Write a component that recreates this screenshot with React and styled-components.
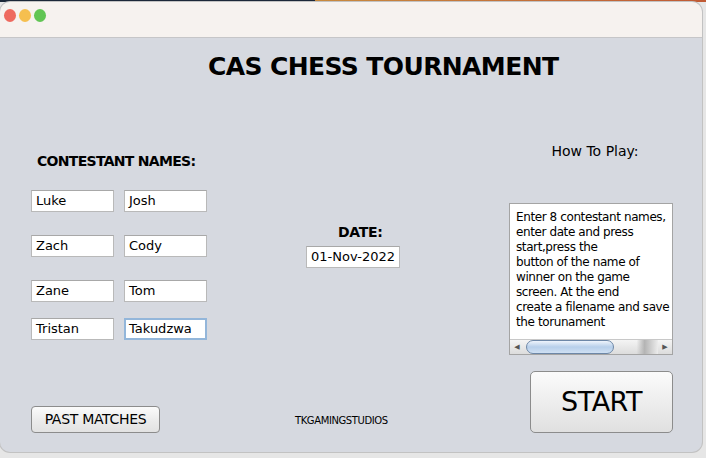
import React from 'react';
import styled, { createGlobalStyle } from 'styled-components';

const GlobalStyle = createGlobalStyle`
  html, body {
    margin: 0;
    padding: 0;
    width: 706px;
    height: 458px;
    overflow: hidden;
    background: #e6e6e6;
    font-family: 'DejaVu Sans', 'Liberation Sans', sans-serif;
  }
`;

const players = [
  ['Luke', 'Josh'],
  ['Zach', 'Cody'],
  ['Zane', 'Tom'],
  ['Tristan', 'Takudzwa'],
];

const howTo = [
  'Enter 8 contestant names,',
  'enter date and press',
  'start,press the',
  'button of the name of',
  'winner on the game',
  'screen. At the end',
  'create a filename and save',
  'the torunament',
];

const App = () => {
  return (
    <Screen>
      <GlobalStyle />
      <TopStrip />
      <Window>
        <TitleBar>
          <Light color="#ee6a5f" />
          <Light color="#f5bf4f" />
          <Light color="#61c554" />
        </TitleBar>
        <Body>
          <Title>CAS CHESS TOURNAMENT</Title>
          <Columns>
            <LeftCol>
              <Heading>CONTESTANT NAMES:</Heading>
              <NameGrid>
                {players.flat().map((name, i) => (
                  <NameField key={name} focused={i === 7}>{name}</NameField>
                ))}
              </NameGrid>
              <PastButton>PAST MATCHES</PastButton>
            </LeftCol>
            <MidCol>
              <DateLabel>DATE:</DateLabel>
              <DateField>01-Nov-2022</DateField>
              <Studio>TKGAMINGSTUDIOS</Studio>
            </MidCol>
            <RightCol>
              <HowLabel>How To Play:</HowLabel>
              <TextArea>
                <TextLines>
                  {howTo.map((line) => (
                    <div key={line}>{line}</div>
                  ))}
                </TextLines>
                <HScroll>
                  <Arrow>◀</Arrow>
                  <Track>
                    <Thumb />
                  </Track>
                  <Arrow>▶</Arrow>
                </HScroll>
              </TextArea>
              <StartButton>START</StartButton>
            </RightCol>
          </Columns>
        </Body>
      </Window>
    </Screen>
  );
};

const Screen = styled.div`
  width: 706px;
  height: 458px;
  background: #e6e6e6;
`;

const TopStrip = styled.div`
  height: 2px;
  background: linear-gradient(to right, #1b2738 0, #1b2738 315px, #c88a3e 315px, #c05a34 706px);
`;

const Window = styled.div`
  width: 702px;
  height: 450px;
  border-radius: 10px;
  overflow: hidden;
  background: #d6d9e0;
  display: flex;
  flex-direction: column;
  box-shadow: 0 0 0 1px #c2c2c2;
`;

const TitleBar = styled.div`
  height: 36px;
  flex: none;
  background: #f6f2ef;
  border-bottom: 1px solid #c6c6c8;
  display: flex;
  align-items: flex-start;
  padding: 7px 0 0 4px;
  box-sizing: border-box;
  gap: 3px;
`;

const Light = styled.span`
  width: 12px;
  height: 13px;
  border-radius: 50%;
  background: ${(p) => p.color};
`;

const Body = styled.div`
  flex: 1;
  display: flex;
  flex-direction: column;
`;

const Title = styled.div`
  margin: 14px 0 0 208px;
  font-size: 25px;
  line-height: 30px;
  letter-spacing: -0.6px;
  font-weight: bold;
  color: #000;
  white-space: nowrap;
`;

const Columns = styled.div`
  flex: 1;
  display: flex;
  padding-bottom: 19px;
`;

const LeftCol = styled.div`
  width: 176px;
  margin-left: 31px;
  display: flex;
  flex-direction: column;
`;

const Heading = styled.div`
  margin: 70px 0 0 6px;
  font-size: 14px;
  line-height: 18px;
  letter-spacing: -0.7px;
  font-weight: bold;
  white-space: nowrap;
`;

const NameGrid = styled.div`
  margin-top: 20px;
  display: grid;
  grid-template-columns: 83px 83px;
  grid-template-rows: 45px 45px 38px 22px;
  column-gap: 10px;
`;

const Field = styled.div`
  box-sizing: border-box;
  height: 22px;
  background: #fff;
  border: 1px solid #b9b9b9;
  border-top-color: #a8a8a8;
  font-size: 13px;
  line-height: 20px;
  padding-left: 4px;
  color: #000;
  white-space: nowrap;
`;

const NameField = styled(Field)`
  ${(p) => p.focused && `
    border: 2px solid #93b6da;
    line-height: 18px;
    padding-left: 3px;
  `}
`;

const PastButton = styled.div`
  margin-top: auto;
  width: 129px;
  height: 27px;
  box-sizing: border-box;
  border: 1px solid #8c8c8c;
  border-radius: 4px;
  background: linear-gradient(#fbfbfb, #ebebeb 55%, #e2e2e2);
  font-size: 14px;
  line-height: 25px;
  letter-spacing: -0.3px;
  text-align: center;
  color: #000;
`;

const MidCol = styled.div`
  width: 105px;
  margin-left: 88px;
  display: flex;
  flex-direction: column;
`;

const DateLabel = styled.div`
  margin: 141px 0 0 43px;
  font-size: 14px;
  line-height: 18px;
  letter-spacing: -0.3px;
  font-weight: bold;
`;

const DateField = styled(Field)`
  margin: 5px 0 0 11px;
  width: 94px;
`;

const Studio = styled.div`
  margin-top: auto;
  margin-bottom: 6px;
  font-size: 10px;
  line-height: 12px;
  letter-spacing: -0.4px;
  white-space: nowrap;
`;

const RightCol = styled.div`
  width: 164px;
  margin-left: 109px;
  display: flex;
  flex-direction: column;
  align-items: flex-end;
`;

const HowLabel = styled.div`
  align-self: center;
  margin: 60px 0 0 8px;
  font-size: 14px;
  line-height: 18px;
`;

const TextArea = styled.div`
  margin-top: 43px;
  width: 164px;
  height: 152px;
  box-sizing: border-box;
  border: 1px solid #a4a4a4;
  background: #fff;
  display: flex;
  flex-direction: column;
  overflow: hidden;
`;

const TextLines = styled.div`
  flex: 1;
  padding: 6px 0 0 6px;
  font-size: 12px;
  line-height: 15px;
  letter-spacing: -0.4px;
  white-space: nowrap;
`;

const HScroll = styled.div`
  height: 14px;
  flex: none;
  display: flex;
  align-items: center;
  background: linear-gradient(#f4f4f4, #dcdcdc);
  border-top: 1px solid #c8c8c8;
`;

const Arrow = styled.span`
  flex: none;
  width: 14px;
  font-size: 7px;
  color: #555;
  text-align: center;
`;

const Track = styled.div`
  flex: 1;
  height: 14px;
  display: flex;
  align-items: center;
  background: linear-gradient(to right, transparent 84%, #b4b4b4 90%, #ececec);
`;

const Thumb = styled.div`
  flex: none;
  margin-left: 2px;
  width: 88px;
  height: 14px;
  border-radius: 8px;
  box-sizing: border-box;
  border: 1px solid #6d87a7;
  background: linear-gradient(#eef4fc, #b7cfea 50%, #cfe0f3);
`;

const StartButton = styled.div`
  margin-top: auto;
  width: 143px;
  height: 62px;
  box-sizing: border-box;
  border: 1px solid #8c8c8c;
  border-radius: 5px;
  background: linear-gradient(#fbfbfb, #ececec 55%, #e0e0e0);
  font-size: 27px;
  line-height: 60px;
  letter-spacing: -0.5px;
  text-align: center;
  color: #000;
`;

export default App;
